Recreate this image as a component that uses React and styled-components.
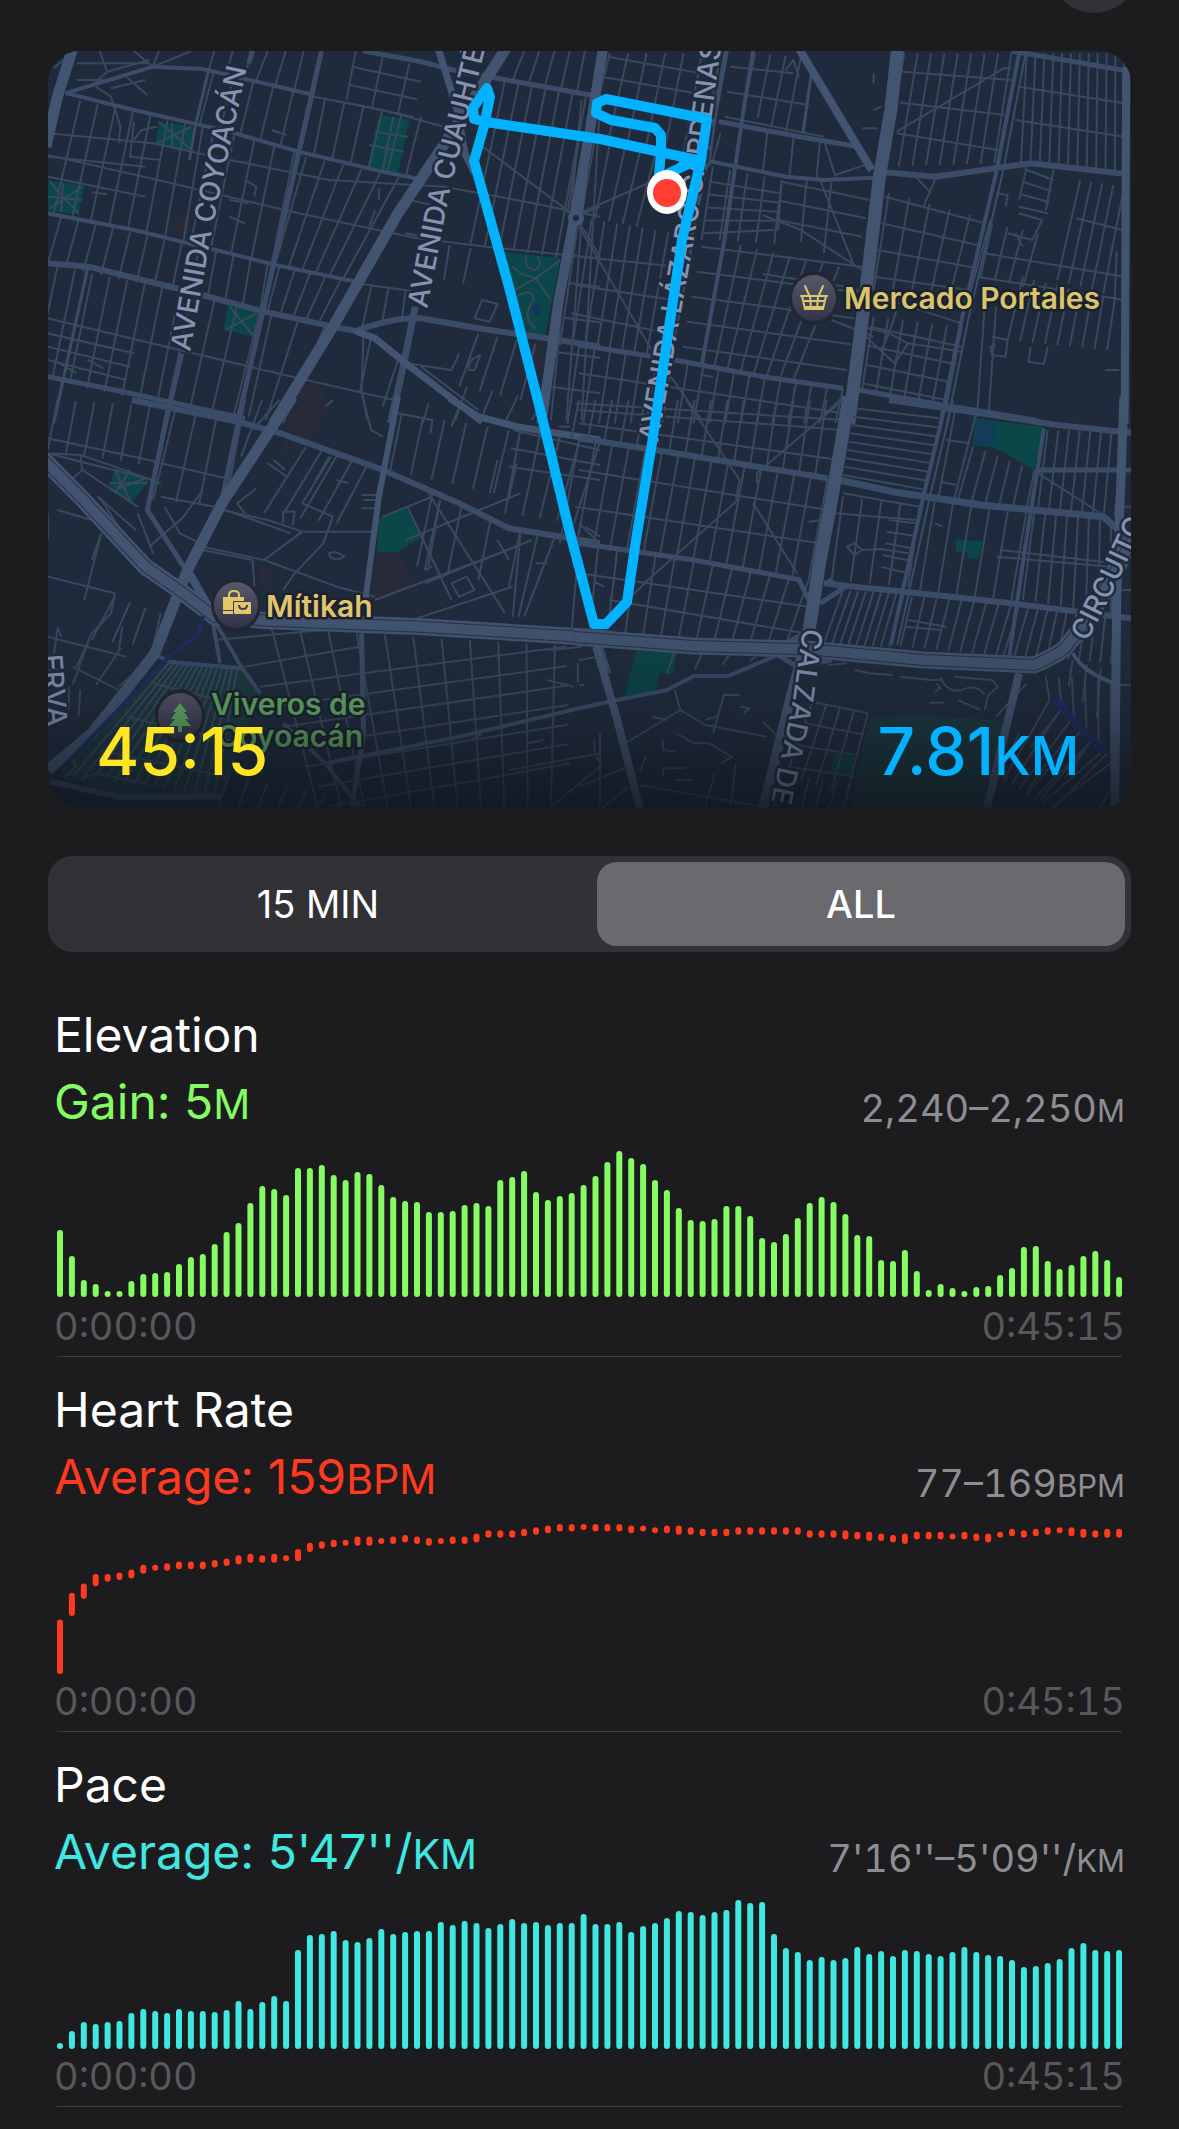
import React, { useState } from 'react';
import styled, { createGlobalStyle } from 'styled-components';

const GlobalStyle = createGlobalStyle`
  * {
    box-sizing: border-box;
  }

  body {
    margin: 0;
    background: #1c1c1e;
    color: #ffffff;
    font-family: Inter, "Liberation Sans", sans-serif;
  }
`;

const Page = styled.main`
  padding-bottom: 22px;
`;

const Header = styled.header`
  display: flex;
  align-items: flex-end;
  justify-content: flex-end;
  height: 13px;
  padding-right: 40px;
  margin-bottom: 38px;
`;

const CloseButton = styled.button`
  flex-shrink: 0;
  width: 90px;
  height: 90px;
  border: 0;
  border-radius: 50%;
  background: #323136;
`;

const MapCard = styled.section`
  position: relative;
  margin: 0 48px;
  border-radius: 32px;
  background: #1f2b3d;
  overflow: hidden;
`;

const MapSvg = styled.svg`
  display: block;
  width: 100%;
  height: auto;
`;

const MapFooter = styled.div`
  position: absolute;
  left: 0;
  right: 0;
  bottom: 0;
  display: flex;
  align-items: baseline;
  justify-content: space-between;
  padding: 60px 52px 18px 48px;
`;

const MapStat = styled.div`
  color: ${props => props.$color};
  font-size: 66px;
  line-height: 78px;
  font-weight: 500;
`;

const MapUnit = styled.span`
  font-size: 53px;
  line-height: 1;
`;

const Segments = styled.div`
  display: flex;
  gap: 15px;
  margin: 48px 48px 30px;
  padding: 6px;
  border-radius: 24px;
  background: #323136;
`;

const Segment = styled.button`
  flex: 1;
  height: 84px;
  border: 0;
  border-radius: 20px;
  background: ${props => (props.$active ? '#6a696e' : 'transparent')};
  color: #ffffff;
  font: inherit;
  font-size: 38px;
  font-weight: ${props => (props.$active ? 500 : 400)};
`;

const Metric = styled.section`
  margin: 0 57px;
  padding: 19px 0 7px;
  border-bottom: 1px solid #3d3d40;
`;

const MetricTitle = styled.h2`
  margin: 0 -3px;
  font-size: 48px;
  line-height: 67px;
  font-weight: 400;
`;

const MetricRow = styled.div`
  display: flex;
  align-items: flex-end;
  justify-content: space-between;
  height: 67px;
  margin: 0 -3px 14px;
`;

const MetricValue = styled.div`
  color: ${props => props.$color};
  font-size: 48px;
  line-height: 67px;
`;

const MetricRange = styled.div`
  padding-bottom: 4px;
  color: #8e8e92;
  font-size: 38px;
  line-height: 46px;
  font-variant-numeric: tabular-nums;
`;

const Unit = styled.span`
  font-size: ${props => (props.$small ? 31 : 41)}px;
  line-height: 1;
`;

const Chart = styled.svg`
  display: block;
  width: 100%;
  height: auto;
`;

const TimeRow = styled.div`
  display: flex;
  justify-content: space-between;
  margin: 4px -3px 0;
  color: #58585b;
  font-size: 38px;
  line-height: 46px;
  font-variant-numeric: tabular-nums;
`;

const elevation = [
  67, 41, 17, 13, 6, 6, 16, 23, 24, 25, 33, 40, 43, 53, 65, 74, 94, 111, 108, 102,
  129, 129, 132, 122, 117, 125, 123, 112, 100, 96, 95, 85, 85, 86, 92, 94, 91, 117, 120, 126,
  105, 97, 101, 104, 112, 121, 135, 146, 139, 133, 117, 107, 89, 77, 76, 78, 91, 91, 81, 59,
  55, 63, 79, 94, 100, 95, 83, 62, 61, 37, 36, 47, 26, 7, 13, 9, 6, 10, 11, 22,
  29, 50, 51, 36, 28, 32, 41, 46, 37, 20,
];

const pace = [
  6, 18, 27, 25, 27, 28, 36, 40, 38, 36, 40, 38, 38, 37, 39, 48, 40, 47, 53, 48,
  99, 114, 115, 118, 109, 107, 111, 120, 115, 117, 118, 118, 127, 124, 128, 126, 121, 125, 130, 126,
  127, 124, 126, 126, 135, 125, 125, 127, 117, 123, 126, 131, 138, 137, 134, 137, 139, 149, 146, 147,
  115, 101, 97, 89, 92, 89, 91, 102, 95, 98, 93, 99, 98, 95, 93, 97, 102, 97, 94, 93,
  89, 82, 83, 86, 90, 101, 106, 99, 98, 99,
];

// highest bpm of each 30s slot, and how far below it the slot went
const heartHigh = [
  108, 125, 131, 137, 137, 138, 140, 143, 143, 144, 145, 145, 145, 146, 147, 149, 150, 149, 150, 149,
  153, 157, 158, 159, 159, 161, 161, 160, 161, 162, 161, 160, 160, 161, 161, 163, 165, 165, 165, 166,
  167, 168, 169, 169, 169, 169, 169, 169, 168, 168, 167, 168, 168, 167, 166, 166, 166, 167, 167, 167,
  167, 167, 167, 165, 165, 165, 165, 164, 164, 163, 162, 163, 164, 164, 164, 163, 164, 163, 163, 164,
  166, 165, 166, 167, 167, 167, 166, 165, 166, 166,
];
const heartSpan = [
  31, 11, 6, 4, 1, 1, 2, 2, 0, 1, 1, 1, 1, 1, 1, 2, 2, 1, 2, 0,
  4, 2, 1, 1, 0, 2, 2, 0, 1, 1, 1, 1, 0, 1, 1, 2, 1, 1, 1, 1,
  1, 1, 1, 1, 0, 1, 1, 1, 1, 0, 0, 1, 2, 1, 1, 1, 1, 1, 1, 1,
  1, 1, 1, 1, 1, 1, 2, 1, 2, 1, 1, 3, 1, 1, 1, 0, 1, 1, 2, 0,
  1, 1, 1, 1, 0, 2, 2, 1, 2, 2,
];

const barsFrom = (heights, base) => heights.map(h => [base - h, base]);

const bpmY = v => ((169 - v) * 144) / 92;
const heartBars = heartHigh.map((high, i) => [bpmY(high), bpmY(high - heartSpan[i]) + 6]);

const BarChart = ({ bars, color, label }) => (
  <Chart viewBox="0 0 1065 150" role="img" aria-label={label}>
    {bars.map(([top, bottom], i) => (
      <rect key={i} x={i * 11.9} y={top} width="6" height={bottom - top} rx="3" fill={color} />
    ))}
  </Chart>
);

const metrics = [
  {
    title: 'Elevation',
    value: 'Gain: 5',
    unit: 'M',
    range: '2,240–2,250',
    color: '#85fd62',
    bars: barsFrom(elevation, 148),
  },
  {
    title: 'Heart Rate',
    value: 'Average: 159',
    unit: 'BPM',
    range: '77–169',
    color: '#ff3a1e',
    bars: heartBars,
  },
  {
    title: 'Pace',
    value: "Average: 5'47''/",
    unit: 'KM',
    range: "7'16''–5'09''/",
    color: '#40e8e2',
    bars: barsFrom(pace, 150),
  },
];

// The street map is stored as four tiles. A block is a run of side streets:
// [start edge x1 y1 x2 y2, end edge x1 y1 x2 y2, count].
const tiles = [
  {
    x: 0,
    y: 0,
    parks: [
      '415,365 505,380 495,455 405,435',
      '990,345 1070,360 1040,520 960,500',
      '125,540 220,558 205,645 125,630',
      '595,915 675,935 665,1010 585,990',
      '1315,755 1465,775 1425,1005 1365,995',
      '125,330 138,330 128,370',
    ],
    plots: ['460,640 495,650 490,712 450,702', '780,1150 850,1160 840,1270 750,1270', '1380,1030 1425,1035 1415,1110 1390,1105'],
    blocks: [
      [560, 210, 820, 280, 520, 380, 785, 455, 6],
      [700, 153, 840, 153, 670, 240, 820, 280, 4],
      [560, 153, 655, 153, 545, 210, 640, 235, 3],
      [850, 295, 1100, 350, 820, 465, 1060, 530, 6],
      [930, 153, 1070, 190, 905, 300, 1040, 340, 3],
      [920, 200, 910, 310, 1100, 245, 1080, 350, 3],
      [210, 300, 530, 380, 140, 640, 480, 720, 8],
      [560, 385, 770, 450, 500, 720, 710, 790, 5],
      [160, 650, 700, 790, 125, 790, 680, 930, 13],
      [150, 800, 470, 870, 90, 1130, 410, 1210, 8],
      [500, 890, 680, 930, 440, 1210, 610, 1250, 4],
      [800, 470, 1090, 545, 720, 790, 930, 850, 7],
      [730, 800, 930, 850, 700, 930, 870, 970, 6],
      [710, 940, 850, 975, 650, 1250, 740, 1270, 3],
      [1320, 240, 1568, 290, 1230, 730, 1490, 780, 8],
      [1370, 153, 1568, 153, 1340, 240, 1550, 285, 6],
      [1520, 300, 1568, 310, 1440, 1260, 1520, 1260, 3],
      [970, 860, 1060, 870, 945, 990, 1050, 960, 3],
      [1250, 1000, 1400, 1030, 1200, 1160, 1360, 1200, 4],
      [1220, 1160, 1420, 1200, 1190, 1260, 1390, 1260, 4],
      [125, 470, 125, 530, 380, 500, 380, 590, 2],
      [200, 190, 200, 240, 390, 190, 300, 240, 2],
      [125, 1000, 125, 1080, 350, 1060, 330, 1140, 3],
      [1490, 850, 1440, 1160, 1568, 860, 1568, 1180, 4],
      [970, 1010, 1040, 1080, 940, 1180, 1000, 1220, 2],
      [1070, 600, 1060, 700, 1150, 620, 1150, 720, 2],
      [1175, 735, 1230, 745, 1160, 840, 1210, 850, 2],
    ],
    lanes: [
      'M125 400L400 430 560 470 860 540 1160 560 1350 600 1568 650',
      'M125 465L450 550 780 640 1090 715 1270 740 1568 775',
      'M125 955L450 1045 800 1140 1030 1200',
      'M930 850L1090 875M820 290L1000 330 1160 380',
      'M195 153L140 205M260 153L280 215 250 245M400 200L350 153M400 200L500 153M400 200L415 153M280 215L390 180M330 230L385 285',
      'M250 260L290 290 315 380 310 430M290 265L380 240M350 365L340 470 420 480M350 420L370 390 410 380',
      'M1250 430L1505 650 1568 620M1505 650L1568 770M1260 900L1300 912 1280 965 1240 955Z',
      'M415 365L500 450M500 380L410 430M450 370L450 445M600 920L660 1005M670 940L590 990M130 545L205 640M215 560L130 625M165 550L160 635M125 590L215 600',
      'M965 435L1055 455M980 395L1065 410M1028 350L1000 510',
      'M1340 800L1360 820 1400 835 1465 780M1345 870L1400 835 1440 900M1375 765Q1370 805 1395 810 1420 800 1405 770M1350 890Q1390 860 1395 900 1360 950 1400 985',
      'M1060 1090L1180 1110 1200 1060M1100 1100L1250 1230M950 1000L945 1170 960 1260M1225 1110Q1220 1080 1255 1065L1240 1110Z',
      'M640 540L670 560 665 590M600 600L650 610M600 650L640 670M710 390L750 405M990 565L990 600M980 630L965 680M240 577L280 583M140 1080L200 1120M230 1080L270 1105',
    ],
    streets: [
      ['M840 153L780 460 690 920 620 1270', 5],
      ['M170 280L400 200 530 207 820 285', 4],
      ['M950 153L1100 185 1200 215 1350 245 1568 290', 5],
      ['M175 280L350 330 600 395 780 455 1000 515 1110 540', 4],
      ['M125 640L350 690 600 760 720 795 930 845', 4],
      ['M125 790L230 800 480 870 690 935 870 980 930 993Q1030 950 1100 955L1250 985 1430 1015 1568 1040', 6],
      ['M1085 920L1050 1120 1020 1270', 7],
      ['M475 1060L432 1270', 5],
      ['M125 1130L300 1170 640 1255', 5],
      ['M230 800L140 1270', 3],
      ['M545 210L510 380 495 480', 3],
      ['M660 153L650 190', 5],
    ],
    avenues: [
      ['M190 145L150 290 120 440', 11],
      ['M1325 140L1180 400 1040 640 870 980 715 1270', 11],
      ['M1145 145L1195 330 1215 460 1240 520', 7],
      ['M1575 150L1540 400 1500 660 1460 900 1415 1270', 10],
      ['M930 993L980 1015 1060 1090 1260 1265', 7],
    ],
  },
  {
    x: 579,
    y: 0,
    parks: [],
    plots: [],
    blocks: [
      [80, 160, 370, 160, 30, 400, 320, 480, 7],
      [75, 170, 45, 290, 370, 230, 340, 350, 3],
      [460, 160, 580, 170, 430, 330, 540, 400, 4],
      [395, 200, 380, 350, 560, 220, 640, 410, 3],
      [355, 370, 630, 420, 340, 500, 620, 540, 5],
      [370, 400, 740, 460, 350, 480, 760, 500, 2],
      [850, 160, 1130, 160, 800, 500, 1085, 490, 9],
      [845, 215, 830, 400, 1130, 240, 1095, 450, 3],
      [1170, 160, 1425, 160, 1155, 490, 1425, 515, 12],
      [1150, 260, 1140, 360, 1425, 310, 1425, 410, 2],
      [810, 580, 1075, 660, 770, 870, 1010, 930, 6],
      [800, 590, 770, 830, 1060, 670, 1020, 870, 4],
      [770, 950, 1000, 980, 740, 1165, 960, 1220, 7],
      [760, 980, 740, 1150, 1000, 1040, 960, 1200, 4],
      [350, 500, 530, 540, 320, 720, 510, 730, 5],
      [345, 545, 325, 700, 525, 580, 510, 690, 5],
      [530, 540, 660, 540, 520, 690, 640, 760, 3],
      [530, 545, 520, 660, 760, 600, 740, 710, 3],
      [380, 725, 680, 800, 320, 1090, 560, 1140, 8],
      [320, 740, 270, 1040, 740, 800, 700, 1110, 5],
      [0, 650, 300, 710, -50, 1035, 240, 1080, 10],
      [0, 770, -20, 940, 260, 800, 230, 1000, 3],
      [0, 420, 200, 460, -30, 640, 150, 680, 6],
      [0, 1040, 690, 1165, -30, 1270, 670, 1270, 18],
      [0, 1120, -10, 1210, 690, 1240, 690, 1260, 2],
      [1310, 540, 1425, 560, 1250, 840, 1370, 880, 5],
      [1170, 500, 1240, 510, 1150, 600, 1220, 630, 2],
      [1170, 510, 1150, 620, 1240, 540, 1225, 640, 4],
      [1060, 760, 1040, 830, 1425, 830, 1425, 900, 2],
      [1080, 670, 1200, 700, 1050, 830, 1160, 860, 4],
      [1160, 830, 1400, 900, 1120, 1020, 1380, 1050, 9],
      [880, 530, 930, 540, 920, 580, 900, 620, 2],
      [1060, 920, 1090, 920, 1040, 1250, 1070, 1250, 2],
    ],
    lanes: [
      'M830 395L1110 205 1130 205M640 420L670 530M630 540L720 800',
      'M0 640L200 540M0 680L190 1050M480 645L580 690 740 810',
      'M480 822L700 860 1000 970M660 960L770 1010M670 525L760 490M740 980L810 1000 860 1030 1000 1055M860 1030L825 1090 750 1010M810 1000L790 1050M810 1000L830 930',
      'M1080 1010L1120 1020 1115 1070 1080 1065 1075 1040 1090 1035M1180 1040L1175 1085 1215 1092 1225 1040M1120 700L1185 720 1210 660 1150 640M1160 740L1140 700M1090 580L1120 585 1115 620',
      'M240 1130L320 1260M320 1125L350 1130M640 1245L690 1190M1375 1110H1412M1300 655L1420 690M1400 900L1405 755',
      'M540 210L560 180 575 230M770 220V250M740 385H780M770 330L790 320',
    ],
    streets: [
      ['M365 365L600 415 730 440', 5],
      ['M325 480L540 530 640 540 770 533', 4],
      ['M800 517L930 530 1180 490 1430 522', 6],
      ['M1130 153L1430 212', 5],
      ['M1150 160L1090 520 1000 960 945 1270', 4],
      ['M1167 160L1107 520 1017 960 962 1270', 2],
      ['M455 153L430 330 380 720 320 1100', 4],
      ['M610 200L585 400', 3],
      ['M0 1035L250 1080 480 1130 690 1165', 5],
      ['M730 1170L950 1215 1200 1262', 5],
      ['M385 153L330 500 190 1270', 5],
    ],
    avenues: [
      ['M833 140L815 330 785 530 750 870 705 1270', 13],
      ['M572 140L650 290 765 510', 8],
      ['M65 145L20 440 0 640', 8],
      ['M1430 200L1426 1270', 8],
    ],
  },
  {
    x: 0,
    y: 400,
    parks: [
      '300,205 390,240 345,305 285,270',
      '990,355 1065,320 1103,410 1040,455 985,458',
    ],
    gardens: ['430,790 625,805 680,880 640,1000 580,1190 300,1180 150,1130 240,1020'],
    plots: ['985,460 1045,460 1080,555 970,600', '680,500 715,505 710,562 675,555', '760,0 870,0 800,130 740,160'],
    blocks: [
      [150, 0, 440, 20, 125, 150, 410, 200, 7],
      [125, 115, 125, 160, 410, 185, 400, 240, 2],
      [460, 20, 620, 60, 400, 300, 580, 320, 4],
      [420, 190, 420, 290, 610, 240, 560, 320, 2],
      [640, 0, 730, 0, 600, 250, 660, 90, 3],
      [800, 140, 960, 195, 690, 340, 880, 370, 5],
      [1050, 40, 1330, 90, 1020, 210, 1290, 280, 6],
      [1040, 0, 1200, 20, 1030, 60, 1180, 80, 3],
      [1360, 90, 1568, 125, 1320, 340, 1500, 370, 5],
      [1340, 90, 1330, 200, 1568, 150, 1568, 240, 3],
      [1130, 280, 1360, 390, 1090, 500, 1330, 560, 4],
      [1120, 280, 1150, 300, 1320, 640, 1120, 500, 2],
      [1060, 420, 1110, 550, 1360, 280, 1390, 420, 2],
      [980, 600, 1050, 670, 1350, 440, 1340, 560, 2],
      [1360, 400, 1450, 410, 1340, 650, 1370, 650, 3],
      [710, 685, 1450, 735, 830, 1220, 1440, 1220, 11],
      [680, 860, 860, 1220, 1480, 740, 1490, 1090, 7],
      [560, 720, 640, 800, 940, 680, 940, 740, 2],
      [125, 340, 265, 400, 125, 420, 240, 480, 2],
      [440, 790, 620, 805, 190, 1130, 560, 1190, 15],
      [400, 850, 260, 1050, 640, 920, 590, 1130, 3],
      [150, 690, 400, 770, 130, 850, 310, 860, 4],
      [300, 590, 420, 640, 240, 720, 400, 740, 4],
      [260, 290, 360, 340, 320, 400, 400, 460, 2],
      [1440, 750, 1568, 1220, 1520, 740, 1568, 1000, 2],
      [600, 1120, 900, 1200, 570, 1225, 880, 1225, 7],
      [1300, 180, 1350, 190, 1280, 280, 1330, 290, 2],
    ],
    lanes: [
      'M125 160L210 165 300 200 420 250M210 165L215 210 185 240M215 210L360 320M300 210L340 300M285 250L385 250M340 210L300 280M380 235L310 265',
      'M580 330L700 360 790 395 975 395M790 395L690 480 880 560 980 590M690 480L530 440M530 450L660 480 665 560M865 170L790 310 870 350 845 430 770 520 740 570',
      'M590 330L760 400M640 340L620 310 670 265M740 370V335H770L765 375M860 460Q880 450 900 470 880 485 862 470ZM700 190L750 230M715 180L745 210M820 250L860 170M880 240L910 250',
      'M945 285H985M950 300H985M945 325H980M950 0L970 90 1000 110M1040 40L1130 60 1125 100M1000 350L1130 290M1065 320L1180 600',
      'M265 400L220 600M125 530L300 580 290 640 240 700 200 800M150 680L160 710M125 810H160L140 850M320 680L310 750M390 440L480 350 530 270',
      'M430 320L470 400 540 440M150 330L270 370M255 290L355 390M125 710L330 770M190 800L310 870M180 860V930M210 870L205 950M1150 300L1110 510M1300 420L1330 480M1180 550L1220 530 1240 570 1200 590Z',
      'M1330 1110L1568 1060M1440 1220L1568 1100M1430 840L1500 860M1510 790V850M1230 1020L1260 1000M1380 1030L1420 1020M210 1140L250 1120 380 1150M180 1060L200 1100 170 1130',
      'M1110 510L1130 500M1460 80H1490M1530 380L1568 410M1400 490H1430M870 0L850 20',
    ],
    streets: [
      ['M345 0L620 65 720 95 990 205 1200 310 1330 385 1490 415 1568 430', 6],
      ['M445 0L385 330 480 500', 5],
      ['M635 0L580 300', 5],
      ['M545 640L580 700 630 800 680 880', 4],
      ['M945 700L950 1000 920 1220', 5],
      ['M410 765L440 785 630 805', 4],
      ['M555 660L575 790', 4],
      ['M850 1090L1200 1010 1568 910', 4],
      ['M740 970L850 1090 940 1220', 4],
      ['M130 1145L310 1190 580 1190', 6],
      ['M1568 740L1590 820', 6],
    ],
    avenues: [
      ['M765 -10L700 100 580 310 490 510 405 760 240 1000 125 1110', 11],
      ['M1040 -10L990 290 955 600', 6],
      ['M1175 -5L1250 50 1350 80 1568 120', 7],
      ['M490 510L560 650', 8],
    ],
    highways: ['M110 175L210 290 380 500 480 580 560 650 700 662 1100 680 1580 715'],
  },
  {
    x: 579,
    y: 400,
    parks: [
      '1035,55 1215,80 1190,210 1090,145 1030,135',
      '985,420 1055,422 1045,478 1015,475 1018,458 985,455',
      '150,750 255,760 245,822 210,820 200,880 118,888',
      '665,1060 725,1070 718,1135 658,1118',
    ],
    gardens: ['760,950 900,945 1050,958 1130,965 1065,1230 705,1230'],
    plots: [],
    blocks: [
      [0, 0, 690, 0, -20, 115, 660, 230, 17],
      [0, 30, 0, 70, 690, 90, 680, 180, 2],
      [0, 120, 650, 235, -50, 430, 600, 540, 16],
      [0, 210, -10, 320, 650, 330, 630, 430, 2],
      [0, 430, 600, 540, -20, 700, 540, 735, 13],
      [0, 520, 80, 600, 600, 620, 590, 700, 2],
      [720, 25, 690, 225, 940, 55, 910, 270, 9],
      [690, 290, 890, 320, 660, 540, 860, 560, 5],
      [690, 280, 670, 340, 890, 320, 880, 360, 2],
      [810, 360, 790, 500, 880, 370, 860, 520, 5],
      [690, 570, 850, 580, 640, 730, 810, 740, 9],
      [870, 590, 1130, 610, 840, 740, 1090, 765, 9],
      [1150, 615, 1400, 655, 1110, 765, 1390, 790, 11],
      [930, 300, 1170, 330, 890, 580, 1130, 600, 6],
      [1190, 335, 1390, 360, 1160, 600, 1390, 640, 8],
      [1100, 450, 1090, 470, 1400, 490, 1390, 500, 2],
      [1225, 90, 1420, 95, 1200, 320, 1400, 350, 8],
      [985, 20, 1040, 30, 940, 290, 980, 300, 2],
      [1030, 140, 1190, 210, 990, 300, 1170, 325, 6],
      [960, 120, 930, 370, 1020, 130, 950, 380, 3],
      [860, 660, 850, 680, 960, 680, 950, 690, 2],
      [610, 905, 755, 940, 540, 1130, 700, 1180, 5],
      [610, 905, 550, 1100, 755, 940, 720, 1130, 4],
      [530, 1120, 710, 1150, 510, 1220, 690, 1225, 6],
      [1170, 850, 1400, 1150, 1090, 950, 1360, 1225, 4],
      [1150, 1000, 1380, 1060, 1100, 1120, 1240, 1225, 5],
      [1230, 900, 1390, 1090, 1110, 1140, 1230, 1225, 7],
      [1220, 830, 1390, 840, 1230, 900, 1390, 1060, 6],
      [1290, 780, 1400, 820, 1280, 860, 1390, 1000, 4],
      [250, 755, 540, 765, 230, 820, 520, 770, 5],
    ],
    lanes: [
      'M280 0L420 240M690 0L465 220 465 250M415 300L180 540 120 610M455 310L570 520M420 240L410 300',
      'M1200 220L1370 345M600 365L635 360M700 440L720 430 740 450 720 465ZM740 450L790 447 860 460M0 370L45 420M40 545L65 560',
      'M250 870L265 930 330 975 490 1010M265 930L120 1030M330 960L360 950M380 885H420M420 920L445 925 430 940M255 1000L300 1030 340 1030 400 1070 370 1090M220 1020V1050L250 1055M220 1105H280M220 1105V1130M40 1025V1060L60 1100',
      'M480 965L520 1010M190 950L230 960M0 780L50 770M0 855H15M0 1160L130 1100M130 1160L60 1225M160 1155L480 1220M380 880L350 1000M175 1070L160 1110M410 1090L395 1220M355 1120L330 1220',
      'M720 810L760 820 820 825M840 830L920 840 950 840M945 830Q960 880 1000 870 1040 850 1060 885M980 830L1080 840 1095 860 1070 885 1060 930M935 850L945 865 930 875M915 908H955M990 900L1050 930',
      'M650 795L700 790M300 1140L250 1140M1410 570H1443M1410 320H1443M1410 855H1443',
    ],
    streets: [
      ['M0 115L200 150 650 235', 6],
      ['M680 240L820 275 1050 315 1370 350 1410 390', 7],
      ['M810 0L1050 40 1250 75 1443 98', 6],
      ['M0 430L300 480 580 540', 5],
      ['M640 550L720 560 850 575 1130 610 1443 655', 6],
      ['M1195 210H1443', 5],
      ['M960 0L900 290 815 735', 4],
      ['M977 0L917 290 832 735', 2],
      ['M1215 85L1165 450 1125 765', 4],
      ['M0 925L100 900 230 870 300 828 390 828 520 765', 4],
      ['M575 540L605 610M650 540L690 565 630 610M540 730L590 700M520 765L570 800 660 780', 5],
    ],
    avenues: [
      ['M706 -10L660 300 630 480 600 700', 13],
      ['M590 740L560 860 480 1230', 10],
      ['M1424 -10L1405 600 1400 1230', 9],
      ['M1150 820L1065 1230', 8],
      ['M45 740L100 960 160 1230', 8],
      ['M1290 760Q1320 820 1400 850', 4],
    ],
    highways: ['M-10 711L300 738 600 748 900 780 1190 795Q1240 770 1270 745L1340 640 1450 410'],
  },
];

const blockPath = ([ax, ay, bx, by, cx, cy, dx, dy, n]) => {
  let d = '';
  for (let i = 0; i < n; i++) {
    const t = i / (n - 1);
    d += `M${ax + (bx - ax) * t} ${ay + (by - ay) * t}L${cx + (dx - cx) * t} ${cy + (dy - cy) * t}`;
  }
  return d;
};

const Road = styled.path`
  fill: none;
  stroke: ${props => props.$color};
  stroke-width: ${props => props.$width}px;
  stroke-linejoin: round;
  vector-effect: non-scaling-stroke;
`;

const MapTile = ({ tile }) => (
  <g transform={`translate(${tile.x} ${tile.y}) scale(0.38265 0.33333)`}>
    {tile.plots.map(p => <polygon key={p} points={p} fill="#272b39" />)}
    {(tile.gardens || []).map(p => <polygon key={p} points={p} fill="#1b393f" />)}
    {tile.parks.map(p => <polygon key={p} points={p} fill="#0b4648" />)}
    {tile.blocks.map((b, i) => <Road key={i} d={blockPath(b)} $color="#3a485d" $width={2} />)}
    {tile.lanes.map(d => <Road key={d} d={d} $color="#3a485d" $width={2} />)}
    {tile.streets.map(([d, w]) => <Road key={d} d={d} $color="#3b4c68" $width={w} />)}
    {tile.avenues.map(([d, w]) => <Road key={d} d={d} $color="#42546f" $width={w} />)}
    {(tile.highways || []).map(d => (
      <React.Fragment key={d}>
        <Road d={d} $color="#42546f" $width={17} />
        <Road d={d} $color="#25334a" $width={12} />
        <Road d={d} $color="#42546f" $width={10} />
      </React.Fragment>
    ))}
  </g>
);

const StreetLabel = styled.text`
  fill: #8593b1;
  stroke: #1f2b3d;
  stroke-width: 5px;
  stroke-linejoin: round;
  paint-order: stroke;
  font-size: 28px;
  font-weight: 500;
`;

const PlaceLabel = styled.text`
  fill: ${props => props.$color};
  stroke: #1b212e;
  stroke-width: 5px;
  stroke-linejoin: round;
  paint-order: stroke;
  font-size: 30px;
  font-weight: 600;
`;

const streetLabels = [
  { id: 'coyoacan', d: 'M190 352L213 225 255 30', text: 'AVENIDA COYOACÁN' },
  { id: 'cuauhtemoc', d: 'M427 309L449 195 507 -40', text: 'AVENIDA CUAUHTÉMOC' },
  { id: 'lazaro', d: 'M658 443L700 205 735 -60', text: 'AVENIDA LÁZARO CÁRDENAS' },
  { id: 'calzada', d: 'M803 628L793 700 750 900', text: 'CALZADA DE' },
  { id: 'circuito', d: 'M1087 642Q1115 590 1160 490', text: 'CIRCUITO' },
  { id: 'minerva', d: 'M42 655L50 760', text: 'ERVA' },
];

const PinBadge = ({ x, y, children }) => (
  <g transform={`translate(${x} ${y})`}>
    <ellipse rx="25" ry="27" fill="#222733" />
    <ellipse rx="22" ry="23" fill="url(#pin)" />
    {children}
  </g>
);

const RouteMap = () => (
  <MapSvg viewBox="48 51 1083 757" role="img" aria-label="Route map">
    <defs>
      <linearGradient id="pin" x1="0" y1="0" x2="0" y2="1">
        <stop offset="0" stopColor="#56586a" />
        <stop offset="1" stopColor="#32344a" />
      </linearGradient>
      <linearGradient id="shade" x1="0" y1="0" x2="0" y2="1">
        <stop offset="0" stopColor="#10141c" stopOpacity="0" />
        <stop offset="0.5" stopColor="#10141c" stopOpacity="0.2" />
        <stop offset="1" stopColor="#10141c" stopOpacity="0.75" />
      </linearGradient>
      {streetLabels.map(l => <path key={l.id} id={l.id} d={l.d} />)}
    </defs>

    {tiles.map(tile => <MapTile key={`${tile.x}-${tile.y}`} tile={tile} />)}

    <ellipse cx="537" cy="310" rx="4" ry="5" fill="#163266" />
    <polygon points="976,420 996,422 993,446 975,444" fill="#123c57" />
    <path d="M203 616L199 633 168 658 96 733 62 768" fill="none" stroke="#1f2d5c" strokeWidth="4" />
    <path d="M1054 699L1104 752" fill="none" stroke="#1f2b60" strokeWidth="7" />
    <circle cx="576" cy="218" r="8" fill="#42546f" />
    <circle cx="576" cy="218" r="3" fill="#1f2b3d" />

    {streetLabels.map(l => (
      <StreetLabel key={l.id}>
        <textPath href={`#${l.id}`}>{l.text}</textPath>
      </StreetLabel>
    ))}

    <PinBadge x="814" y="298">
      <path d="M-13 -2H13M-11 3H11M-9 9H9M-12 -2L-9 11H9L12 -2M-4 -2L-3 11M4 -2L3 11M-5 -3L-9 -12M5 -3L9 -12" fill="none" stroke="#d9c86e" strokeWidth="2" strokeLinecap="round" />
    </PinBadge>
    <PlaceLabel x="844" y="309" $color="#d9c46a">Mercado Portales</PlaceLabel>

    <PinBadge x="236" y="605">
      <path d="M-13 -8H8V-4H-3V5H-13ZM-13 6H-3V9H-13Z" fill="#e3c768" />
      <path d="M-7 -8V-10Q-7 -14 -2 -14T3 -10V-8" fill="none" stroke="#e3c768" strokeWidth="2" />
      <rect x="-3" y="-4" width="19" height="14" rx="1" fill="#3d4052" />
      <rect x="-2" y="-3" width="17" height="12" rx="1" fill="#e3c768" />
      <path d="M3 0Q3 4 7 4T11 0" fill="none" stroke="#3d4052" strokeWidth="2" />
    </PinBadge>
    <PlaceLabel x="266" y="617" $color="#e0c56c">Mítikah</PlaceLabel>

    <PinBadge x="180" y="716">
      <path d="M0 -13L7 -4H4L9 3H5L11 10H2V16H-2V10H-11L-5 3H-9L-4 -4H-7Z" fill="#62ad63" />
    </PinBadge>
    <PlaceLabel x="211" y="715" $color="#64ae66">Viveros de</PlaceLabel>
    <PlaceLabel x="217" y="747" $color="#64ae66">Coyoacán</PlaceLabel>

    <rect x="48" y="610" width="1083" height="198" fill="url(#shade)" />

    <path
      d="M669 173L697 160 600 139 486 122 474 119 473 108 487 88 490 97 484 126 474 161 509 287 539 405 570 533 594 624H606L627 602 636 540 652 443 682 240 701 160 707 119 677 113 606 99 597 103 596 113 611 120 655 128 661 135 661 152 659 175"
      fill="none"
      stroke="#00b2ff"
      strokeWidth="10"
      strokeLinejoin="round"
      strokeLinecap="round"
    />
    <ellipse cx="667" cy="192" rx="20" ry="22" fill="#ffffff" />
    <ellipse cx="667" cy="193" rx="14" ry="14" fill="#ff3d33" />
  </MapSvg>
);

const App = () => {
  const [span, setSpan] = useState('ALL');

  return (
    <>
      <GlobalStyle />
      <Page>
        <Header>
          <CloseButton type="button" aria-label="Close" />
        </Header>

        <MapCard>
          <RouteMap />
          <MapFooter>
            <MapStat $color="#ffe620">45:15</MapStat>
            <MapStat $color="#00b2ff">7.81<MapUnit>KM</MapUnit></MapStat>
          </MapFooter>
        </MapCard>

        <Segments>
          {['15 MIN', 'ALL'].map(name => (
            <Segment key={name} type="button" $active={span === name} aria-pressed={span === name} onClick={() => setSpan(name)}>
              {name}
            </Segment>
          ))}
        </Segments>

        {metrics.map(m => (
          <Metric key={m.title}>
            <MetricTitle>{m.title}</MetricTitle>
            <MetricRow>
              <MetricValue $color={m.color}>{m.value}<Unit>{m.unit}</Unit></MetricValue>
              <MetricRange>{m.range}<Unit $small>{m.unit}</Unit></MetricRange>
            </MetricRow>
            <BarChart bars={m.bars} color={m.color} label={m.title} />
            <TimeRow>
              <span>0:00:00</span>
              <span>0:45:15</span>
            </TimeRow>
          </Metric>
        ))}
      </Page>
    </>
  );
};

export default App;
